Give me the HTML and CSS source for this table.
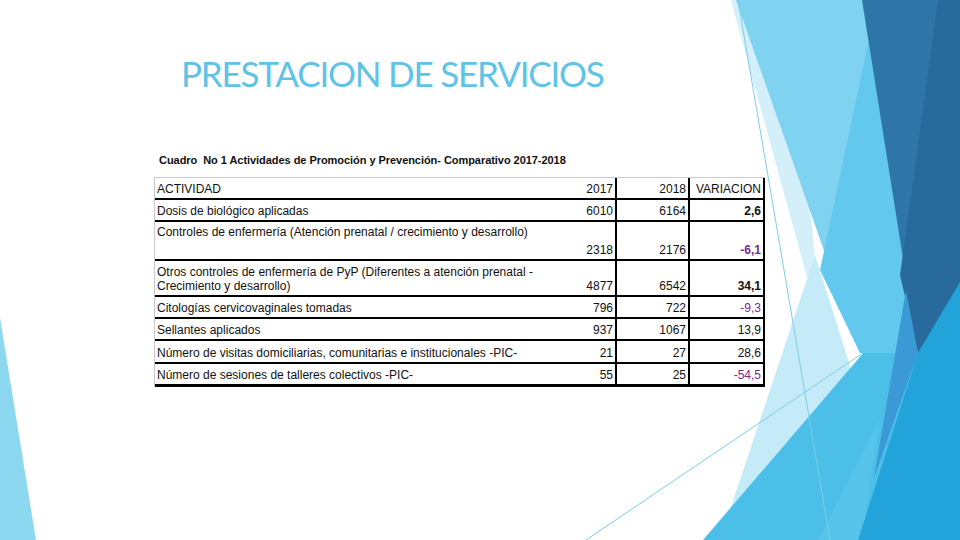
FILE: index.html
```html
<!DOCTYPE html>
<html lang="es">
<head>
<meta charset="utf-8">
<title>Prestacion de servicios</title>
<link rel="stylesheet" href="styles.css">
</head>
<body>
<div class="slide">
  <svg class="deco" width="960" height="540" viewBox="0 0 960 540" aria-hidden="true">
    <polygon points="0,318 36,540 0,540" fill="#8dd8f1"/>
    <polygon points="731,0 790,0 822,332" fill="#d3effa"/>
    <polygon points="815,255 905,540 720,540" fill="#c6ebf8"/>
    <polygon points="736,0 875,0 860,353" fill="#7fd2f0"/>
    <polygon points="836,250 875,330 860,353" fill="#a8e0f5"/>
    <polygon points="703,540 960,240 960,540" fill="#4cbfe9"/>
    <polygon points="872,25 918,353 860,353 820,270" fill="#62c8ee"/>
    <polygon points="862,0 960,0 960,285 918,353" fill="#2f76a8"/>
    <polygon points="938,0 960,0 960,285 918,353 900,275" fill="#296a9c"/>
    <polygon points="818,540 862,540 880,420" fill="#55c3ea"/>
    <polygon points="918,353 960,282 960,540 858,540" fill="#22a4da"/>
    <polygon points="906,290 918,353 874,478" fill="#3b9ad5"/>
    <line x1="738" y1="0" x2="830" y2="540" stroke="#7ccde9" stroke-width="1"/>
    <line x1="586" y1="540" x2="863" y2="353" stroke="#7ccde9" stroke-width="1"/>
  </svg>

  <div class="content">
    <h1 class="title">PRESTACION DE SERVICIOS</h1>
    <p class="caption">Cuadro&nbsp; No 1 Actividades de Promoción y Prevención- Comparativo 2017-2018</p>

    <div class="sheet">
      <div class="row head">
        <div class="cell txt">ACTIVIDAD</div>
        <div class="cell num">2017</div>
        <div class="cell num">2018</div>
        <div class="cell num">VARIACION</div>
      </div>
      <div class="row">
        <div class="cell txt">Dosis de biológico aplicadas</div>
        <div class="cell num">6010</div>
        <div class="cell num">6164</div>
        <div class="cell num b">2,6</div>
      </div>
      <div class="row tall">
        <div class="cell txt top">Controles de enfermería (Atención prenatal / crecimiento y desarrollo)</div>
        <div class="cell num">2318</div>
        <div class="cell num">2176</div>
        <div class="cell num b neg">-6,1</div>
      </div>
      <div class="row mid">
        <div class="cell txt">Otros controles de enfermería de PyP (Diferentes a atención prenatal -<br>Crecimiento y desarrollo)</div>
        <div class="cell num">4877</div>
        <div class="cell num">6542</div>
        <div class="cell num b">34,1</div>
      </div>
      <div class="row">
        <div class="cell txt">Citologías cervicovaginales tomadas</div>
        <div class="cell num">796</div>
        <div class="cell num">722</div>
        <div class="cell num neg">-9,3</div>
      </div>
      <div class="row">
        <div class="cell txt">Sellantes aplicados</div>
        <div class="cell num">937</div>
        <div class="cell num">1067</div>
        <div class="cell num">13,9</div>
      </div>
      <div class="row r23">
        <div class="cell txt">Número de visitas domiciliarias, comunitarias e institucionales -PIC-</div>
        <div class="cell num">21</div>
        <div class="cell num">27</div>
        <div class="cell num">28,6</div>
      </div>
      <div class="row last">
        <div class="cell txt">Número de sesiones de talleres colectivos -PIC-</div>
        <div class="cell num">55</div>
        <div class="cell num">25</div>
        <div class="cell num neg">-54,5</div>
      </div>
    </div>
  </div>
</div>
</body>
</html>
```

FILE: styles.css
```css
* { box-sizing: border-box; }

html, body {
  margin: 0;
  padding: 0;
  background: #ffffff;
}

.slide {
  position: relative;
  width: 960px;
  height: 540px;
  overflow: hidden;
  background: #ffffff;
}

.deco {
  position: absolute;
  left: 0;
  top: 0;
}

.content {
  position: relative;
  z-index: 1;
  padding: 51px 0 0 154px;
  display: flex;
  flex-direction: column;
  align-items: flex-start;
}

.title {
  margin: 0 0 0 27px;
  font-family: Lato, "Open Sans", sans-serif;
  font-weight: 400;
  font-size: 35px;
  line-height: 44px;
  letter-spacing: -1.2px;
  color: #5fc3e7;
}

.caption {
  margin: 58px 0 0 5px;
  font-family: "Liberation Sans", Arial, sans-serif;
  font-weight: 700;
  font-size: 11px;
  line-height: 14px;
  color: #111111;
  letter-spacing: -0.05px;
}

.sheet {
  margin-top: 10px;
  width: 611px;
  background: #ffffff;
  border-top: 1px solid #c8c8c8;
  border-left: 1px solid #c8c8c8;
  font-family: "Liberation Sans", Arial, sans-serif;
  font-size: 12px;
  color: #111111;
}

.row {
  display: grid;
  grid-template-columns: 401px 61px 73px 75px;
  height: 22px;
  border-bottom: 2px solid #000000;
}

.row.tall { height: 39px; }
.row.mid { height: 36px; }
.row.r23 { height: 23px; }
.row.last { height: 23px; border-bottom-width: 3px; }

.cell {
  display: flex;
  align-items: flex-end;
  padding: 0 2px 2px 2px;
  line-height: 14px;
  white-space: nowrap;
}

.cell.top {
  align-items: flex-start;
  padding-top: 3px;
}

.cell.num {
  justify-content: flex-end;
  border-right: 2px solid #000000;
}

.cell.b { font-weight: 700; }

.cell.neg { color: #7a2a8e; }
```
